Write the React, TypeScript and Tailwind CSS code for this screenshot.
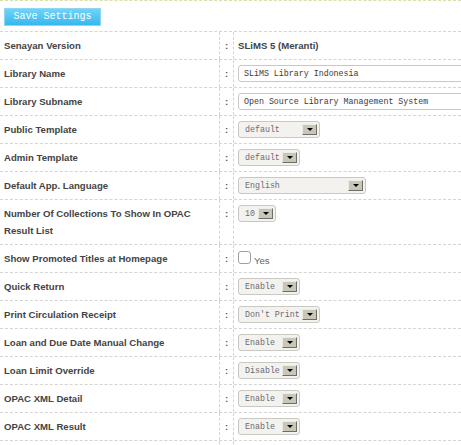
import React from "react";

const sans = { fontFamily: '"Liberation Sans", Arial, sans-serif' };
const mono = { fontFamily: '"Liberation Mono", "Courier New", monospace' };

function Sel({ text, w }: { text: string; w: number }) {
  return (
    <div
      className="relative h-[17px] rounded-[3px] border border-[#c9c9c4] bg-[#f3f2ee] text-[8.3px] leading-[15px] text-[#6b6a78] pl-[6px]"
      style={{ ...mono, width: w }}
    >
      <span>{text}</span>
      <div className="absolute right-[2px] top-[2px] h-[11px] w-[15px] border border-t-[#ecebe4] border-l-[#ecebe4] border-r-[#6f6e66] border-b-[#6f6e66] bg-[#c7c6b8] flex items-center justify-center">
        <div className="w-0 h-0 border-l-[3px] border-r-[3px] border-t-[3px] border-l-transparent border-r-transparent border-t-black" />
      </div>
    </div>
  );
}

function TextIn({ text }: { text: string }) {
  return (
    <div
      className="h-[17px] w-[260px] shrink-0 rounded-[3px] border border-[#c9c9c4] bg-white pl-[5px] text-[8.3px] leading-[15px] text-[#3a3a3a] whitespace-nowrap"
      style={mono}
    >
      {text}
    </div>
  );
}

type Row = { label: React.ReactNode; value: React.ReactNode };

const rows: Row[] = [
  {
    label: "Senayan Version",
    value: <span className="font-bold text-[#444]">SLiMS 5 (Meranti)</span>,
  },
  { label: "Library Name", value: <TextIn text="SLiMS Library Indonesia" /> },
  { label: "Library Subname", value: <TextIn text="Open Source Library Management System" /> },
  { label: "Public Template", value: <Sel text="default" w={82} /> },
  { label: "Admin Template", value: <Sel text="default" w={62} /> },
  { label: "Default App. Language", value: <Sel text="English" w={128} /> },
  {
    label: (
      <>
        Number Of Collections To Show In OPAC
        <br />
        Result List
      </>
    ),
    value: <Sel text="10" w={38} />,
  },
  {
    label: "Show Promoted Titles at Homepage",
    value: (
      <div className="flex items-start h-[17px]">
        <div className="mt-[1px] h-[13px] w-[13px] rounded-[3px] border border-[#a0a0a0] bg-white" />
        <span className="ml-[3px] mt-[5px] text-[9.6px] leading-[12px] text-[#666]">Yes</span>
      </div>
    ),
  },
  { label: "Quick Return", value: <Sel text="Enable" w={62} /> },
  { label: "Print Circulation Receipt", value: <Sel text="Don't Print" w={82} /> },
  { label: "Loan and Due Date Manual Change", value: <Sel text="Enable" w={62} /> },
  { label: "Loan Limit Override", value: <Sel text="Disable" w={62} /> },
  { label: "OPAC XML Detail", value: <Sel text="Enable" w={62} /> },
  { label: "OPAC XML Result", value: <Sel text="Enable" w={62} /> },
  { label: "", value: null },
];

export default function App() {
  return (
    <div className="w-[461px] h-[445px] overflow-hidden bg-white" style={sans}>
      <div className="flex items-start border-t border-dashed border-[#d8e0a8] pt-[7px] pb-[5px] pl-[4px] border-b border-b-[#d4d4d4]">
        <button
          className="h-[18px] w-[97px] border border-[#8fd6f3] bg-gradient-to-b from-[#6fd3f8] to-[#33b8ef] text-[10px] leading-[16px] text-white"
          style={mono}
        >
          Save Settings
        </button>
      </div>
      {rows.map((r, i) => (
        <div key={i} className="flex border-b border-dashed border-[#d4d4d4]">
          <div className="w-[220px] shrink-0 border-r border-dashed border-[#d4d4d4] pl-[4px] py-[5px] text-[9.6px] leading-[17px] font-bold text-[#444]">
            {r.label}
          </div>
          <div className="w-[14px] shrink-0 border-r border-dashed border-[#d4d4d4] py-[5px] text-center text-[9.6px] leading-[17px] font-bold text-[#555]">
            {r.label ? ":" : ""}
          </div>
          <div className="flex-1 min-w-0 pl-[4px] py-[5px] text-[9.6px] leading-[17px] overflow-hidden flex items-start">
            {r.value}
          </div>
        </div>
      ))}
    </div>
  );
}
